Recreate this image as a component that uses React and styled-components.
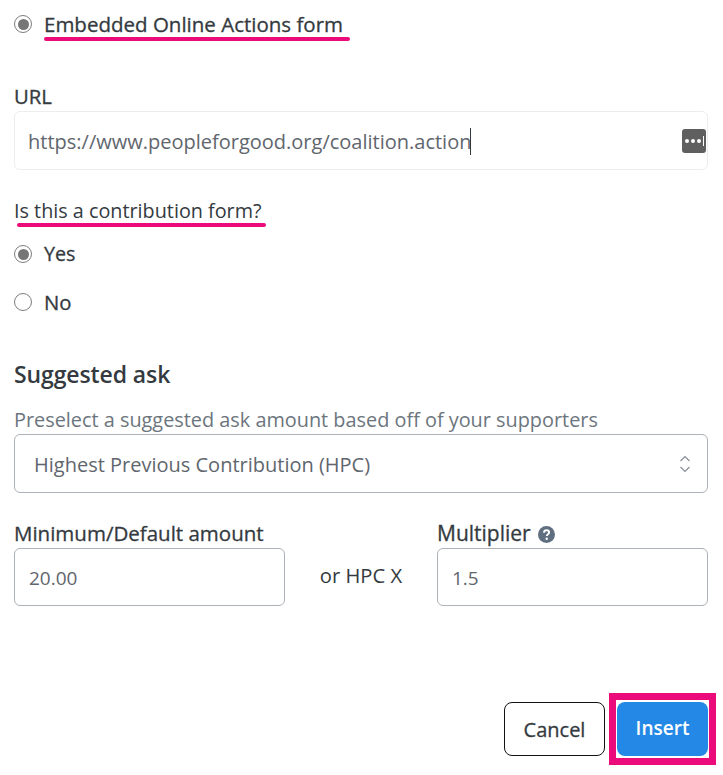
import React from "react";
import styled, { createGlobalStyle, css } from "styled-components";

const Global = createGlobalStyle`
  html, body { margin: 0; padding: 0; background: #fff; }
  body { font-family: "Open Sans", "Noto Sans", sans-serif; color: #343a40; }
`;
const medium = css`-webkit-text-stroke: 0.3px currentColor;`;
const Page = styled.div`
  width: 723px; height: 775px; box-sizing: border-box; padding: 0 15px 0 14px;
  display: flex; flex-direction: column; overflow: hidden;
`;
const RadioRow = styled.label`
  display: flex; align-items: center; gap: 12px; height: 28px;
  margin-top: ${p => p.$top}px; font-size: ${p => p.$size || 20}px; line-height: 28px; color: #343a40;
  ${medium}
`;
const RadioDot = styled.span`
  width: 18px; height: 18px; box-sizing: border-box; border-radius: 50%; flex: none;
  border: 1.5px solid #7d7d7d; background: #fff; display: flex; align-items: center; justify-content: center;
  &::after { content: ""; display: ${p => (p.$on ? "block" : "none")}; width: 11px; height: 11px; border-radius: 50%; background: #767676; }
`;
const Marked = styled.span`position: relative; display: inline-block; white-space: nowrap;`;
const Stroke = styled.span`
  position: absolute; left: ${p => p.$left}px; width: ${p => p.$width}px; top: ${p => p.$top}px; height: 4px;
  border-radius: 2px; background: #ec0b7b; -webkit-text-stroke: 0;
`;
const Label = styled.div`
  font-size: ${p => p.$size || 20.5}px; line-height: 28px; color: #343a40; white-space: nowrap;
  margin-top: ${p => p.$top || 0}px;
  ${p => p.$plain ? "" : medium}
`;
const UrlBox = styled.div`
  height: 59px; box-sizing: border-box; margin-top: 1px; border: 1px solid #ebedef; border-radius: 6px;
  display: flex; align-items: center; padding: 1px 0 0 13px; font-size: 20px; color: #5f666d; position: relative;
`;
const Caret = styled.span`display: inline-block; width: 1px; height: 27px; background: #343a40; margin-left: -1px;`;
const Dots = styled.svg`position: absolute; right: 1px; top: 17px;`;
const Heading = styled.div`font-size: 23px; line-height: 30px; font-weight: 600; color: #343a40; margin-top: 43px; letter-spacing: -0.1px;`;
const Help = styled.div`font-size: 19.87px; line-height: 26px; color: #6c757d; margin-top: 18px; white-space: nowrap;`;
const Select = styled.div`
  height: 59px; box-sizing: border-box; margin-top: 1px; border: 1px solid #adb2b8; border-radius: 6px;
  display: flex; align-items: center; justify-content: space-between; padding: 1px 16px 0 19px;
  font-size: 20px; color: #5f666d;
`;
const AmountRow = styled.div`display: grid; grid-template-columns: 271px 152px 271px; margin-top: 26px;`;
const Field = styled.div`display: flex; flex-direction: column;`;
const InputBox = styled.div`
  height: 58px; box-sizing: border-box; border: 1px solid #adb2b8; border-radius: 6px; margin-top: 1px;
  display: flex; align-items: center; padding: 1px 14px 0; font-size: 19px; color: #5f666d;
`;
const Or = styled.div`font-size: 20.2px; color: #343a40; text-align: center; align-self: end; line-height: 58px; height: 58px; position: relative; top: -2px;`;
const HelpIcon = styled.svg`display: inline-block; vertical-align: -2px; margin-left: 7px;`;
const Footer = styled.div`display: flex; justify-content: flex-end; gap: 12px; margin-top: 96px;`;
const Cancel = styled.button`
  width: 101px; height: 54px; box-sizing: border-box; border: 1px solid #111; border-radius: 8px; background: #fff;
  font: 400 20px "Open Sans", sans-serif; color: #343a40; padding: 0; ${medium}
`;
const Insert = styled.button`
  width: 91px; height: 54px; box-sizing: border-box; border: 0; border-radius: 8px; background: #2489e6; position: relative;
  font: 600 19px "Open Sans", sans-serif; color: #fff; padding: 0 0 3px;
  &::after { content: ""; position: absolute; left: -8px; top: -9px; width: 107px; height: 72px; box-sizing: border-box; border: 7px solid #ec0b7b; }
`;

export default function App() {
  return (
    <Page>
      <Global />
      <RadioRow $top={10} $size={20.5}>
        <RadioDot $on />
        <Marked>Embedded Online Actions form<Stroke $left={0} $width={306} $top={27} /></Marked>
      </RadioRow>
      <Label $top={44} $size={20.3}>URL</Label>
      <UrlBox>
        https://www.peopleforgood.org/coalition.action<Caret />
        <Dots width="24" height="24" viewBox="0 0 24 24">
          <rect width="24" height="24" rx="3" fill="#5f5f5f" />
          <circle cx="5" cy="12" r="2" fill="#fff" /><circle cx="11" cy="12" r="2" fill="#fff" /><circle cx="17" cy="12" r="2" fill="#fff" />
          <rect x="21" y="7" width="1" height="10" fill="#fff" />
        </Dots>
      </UrlBox>
      <Label $top={27} $size={19.8} $plain><Marked>Is this a contribution form?<Stroke $left={3} $width={249} $top={26} /></Marked></Label>
      <RadioRow $top={15} $size={19.7}><RadioDot $on />Yes</RadioRow>
      <RadioRow $top={20} $size={20.3}><RadioDot />No</RadioRow>
      <Heading>Suggested ask</Heading>
      <Help>Preselect a suggested ask amount based off of your supporters</Help>
      <Select>
        Highest Previous Contribution (HPC)
        <svg width="12" height="20" viewBox="0 0 12 20" fill="none" stroke="#868e96" strokeWidth="1.2"><path d="M1.5 7 6 2.500 10.500 7M1.500 13 6 17.500 10.500 13" /></svg>
      </Select>
      <AmountRow>
        <Field><Label>Minimum/Default amount</Label><InputBox>20.00</InputBox></Field>
        <Or>or HPC X</Or>
        <Field>
          <Label $size={21}>Multiplier
            <HelpIcon width="17" height="17" viewBox="0 0 17 17">
              <circle cx="8.5" cy="8.500" r="8.500" fill="#5f6f80" />
              <path d="M6 6.700C6 5.200 7.200 4.300 8.600 4.300s2.500.9 2.500 2.200c0 1.800-2.300 1.800-2.300 3.500" fill="none" stroke="#fff" strokeWidth="1.900" />
              <circle cx="8.700" cy="12.700" r="1.200" fill="#fff" />
            </HelpIcon>
          </Label>
          <InputBox>1.5</InputBox>
        </Field>
      </AmountRow>
      <Footer><Cancel>Cancel</Cancel><Insert>Insert</Insert></Footer>
    </Page>
  );
}
